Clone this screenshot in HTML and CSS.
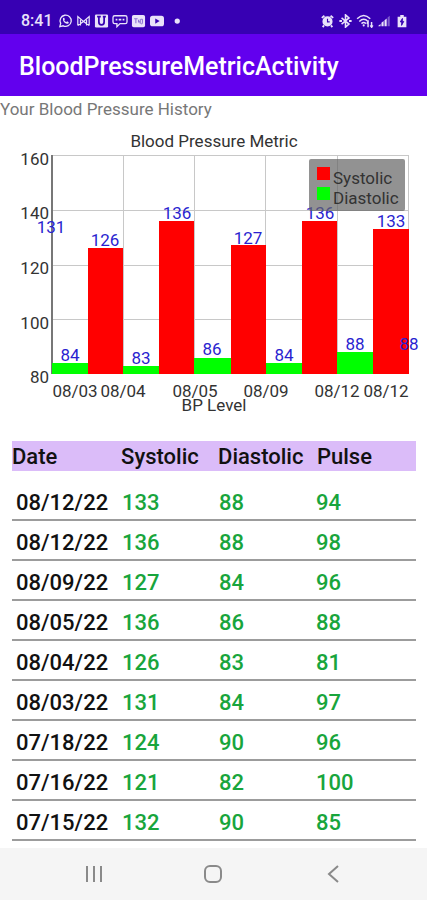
FILE: index.html
```html
<!DOCTYPE html>
<html lang="en">
<head>
  <meta charset="UTF-8">
  <meta name="viewport" content="width=device-width, initial-scale=1.0">
  <title>BloodPressureMetricActivity</title>
  <link rel="stylesheet" href="styles.css">
</head>
<body>
  <div class="status-bar">
    <div class="status-group">
      <span class="clock">8:41</span>
      <svg class="icon" viewBox="0 0 16 16" fill="none" stroke="currentColor" stroke-width="1.5">
        <path d="M1.5 14.5l1-3.8A6.4 6.4 0 1 1 5.400 13.500z"/>
        <path d="M5.200 4.700l1.300-.4.8 1.800-.7.900c.6 1.100 1.300 1.700 2.400 2.200l.9-.8 1.800 1c0 1.400-1 1.900-2 1.800-3-.4-5.200-3.400-4.500-6.500z" fill="currentColor" stroke="none"/>
      </svg>
      <svg class="icon" viewBox="0 0 16 16" fill="none" stroke="currentColor" stroke-width="1.4">
        <path d="M1.500 13V3l6.500 5.500L14.500 3v10M4.500 13V6.500M11.500 13V6.500M1.500 13L8 8.500l6.500 4.500"/>
      </svg>
      <svg class="icon" viewBox="0 0 16 16">
        <rect x="0.500" y="0.500" width="15" height="15" rx="1.500" fill="currentColor"/>
        <path d="M3 3h4.200M5 3v6c0 4.500 6 4.500 6 0V3M9.500 3H13" fill="none" stroke="#3700b3" stroke-width="2"/>
      </svg>
      <svg class="icon wide" viewBox="0 0 18 16" fill="none" stroke="currentColor" stroke-width="1.500">
        <path d="M3 2h12q2 0 2 2v5q0 2-2 2H9l-3.500 3.500V11H3q-2 0-2-2V4q0-2 2-2z"/>
        <path d="M4 6.500h2M7.500 6.500h3M12 6.500h2" stroke-width="2"/>
      </svg>
      <svg class="icon" viewBox="0 0 16 16">
        <rect x="0.500" y="1" width="15" height="14" rx="2" fill="currentColor"/>
        <path d="M3 5.500h4M5 5.500v5M8 6.500v2.500h2M10 6v5M12.500 6v3.500q0 2-1.500 2M12.500 6h-2" fill="none" stroke="#8b70d4" stroke-width="1.200"/>
      </svg>
      <svg class="icon wide" viewBox="0 0 18 16">
        <rect x="1" y="2" width="16" height="12" rx="3" fill="currentColor"/>
        <path d="M7 5l5 3-5 3z" fill="#3700b3"/>
      </svg>
      <svg class="icon" viewBox="0 0 16 16"><circle cx="10" cy="8" r="3" fill="currentColor"/></svg>
    </div>
    <div class="status-group">
      <svg class="icon" viewBox="0 0 16 16" fill="none" stroke="currentColor" stroke-width="2">
        <circle cx="8" cy="8.500" r="4.800" fill="currentColor"/>
        <path d="M1.500 4.500L4.500 2M11.500 2l3 2.500M4 13l-1.500 2M12 13l1.500 2"/>
        <path d="M8 5.500V9h2.500" stroke="#3700b3" stroke-width="1.300"/>
      </svg>
      <svg class="icon" viewBox="0 0 16 16" fill="none" stroke="currentColor" stroke-width="1.800">
        <path d="M3.500 4.500l8.500 7-4 3.500V1l4 3.500-8.500 7"/>
        <path d="M1 8h3M12 8h3" stroke-width="2.400"/>
      </svg>
      <svg class="icon wifi" viewBox="0 0 20 16" fill="none" stroke="currentColor" stroke-width="1.700">
        <path d="M1 5.500Q8.500-2 16 5.500M3.500 8.500Q8.500 3.500 13.500 8.500M6 11Q8.500 8.500 11 11"/>
        <circle cx="8.500" cy="13" r="1.200" fill="currentColor" stroke="none"/>
        <path d="M13.500 15V9l-1.500 2M17.500 9v6l-1.500-2M17.500 15l1.500-2"/>
      </svg>
      <svg class="icon" viewBox="0 0 16 16" fill="currentColor">
        <path d="M1 14h2.500v-2.500L1 13.500zM4.500 14H7V8L4.500 10zM8 14h2.500V5L8 7z"/>
        <path d="M11.500 14H14V2l-2.500 2z" opacity=".4"/>
      </svg>
      <svg class="icon battery" viewBox="0 0 16 16">
        <path d="M6 1h4v2h3v12H3V3h3z" fill="currentColor"/>
        <path d="M8.500 5L6 9h1.700L7.500 13 10 8.500H8.300z" fill="#3700b3" stroke="#3700b3"/>
      </svg>
    </div>
  </div>

  <header class="app-bar">
    <h1>BloodPressureMetricActivity</h1>
  </header>

  <main>
    <p class="subtitle">Your Blood Pressure History</p>

    <svg class="chart" viewBox="0 0 427 312" role="img" aria-label="Blood Pressure Metric">
      <text x="214" y="27" class="middle">Blood Pressure Metric</text>

      <!-- grid -->
      <path class="grid" d="M52 35.500H409M52 90.500H409M52 145.500H409M52 199.500H409M123.500 35V254M194.500 35V254M265.500 35V254M337.500 35V254M408.500 35V254"/>
      <path class="axis" d="M52 35V254"/>

      <g class="end">
        <text x="49" y="45">160</text>
        <text x="49" y="99">140</text>
        <text x="49" y="154">120</text>
        <text x="49" y="209">100</text>
        <text x="49" y="263">80</text>
      </g>

      <g class="systolic">
        <rect x="88" y="128" width="35" height="126"/>
        <rect x="159" y="101" width="35" height="153"/>
        <rect x="231" y="125" width="35" height="129"/>
        <rect x="302" y="101" width="35" height="153"/>
        <rect x="373" y="109" width="36" height="145"/>
      </g>
      <g class="diastolic">
        <rect x="52" y="243" width="36" height="11"/>
        <rect x="123" y="246" width="36" height="8"/>
        <rect x="194" y="238" width="37" height="16"/>
        <rect x="266" y="243" width="36" height="11"/>
        <rect x="337" y="232" width="36" height="22"/>
      </g>

      <g class="value middle">
        <text x="51" y="113">131</text>
        <text x="105" y="126">126</text>
        <text x="177" y="99">136</text>
        <text x="248" y="124">127</text>
        <text x="320" y="99">136</text>
        <text x="391" y="107">133</text>
        <text x="70" y="241">84</text>
        <text x="141" y="244">83</text>
        <text x="212" y="235">86</text>
        <text x="284" y="241">84</text>
        <text x="355" y="230">88</text>
        <text x="409" y="230">88</text>
      </g>

      <g class="middle">
        <text x="75" y="277">08/03</text>
        <text x="123" y="277">08/04</text>
        <text x="195" y="277">08/05</text>
        <text x="266" y="277">08/09</text>
        <text x="337" y="277">08/12</text>
        <text x="386" y="277">08/12</text>
        <text x="214" y="291">BP Level</text>
      </g>

      <!-- legend -->
      <rect class="legend" x="309" y="39" width="96" height="52" rx="2"/>
      <rect class="systolic" x="317" y="47" width="13" height="13"/>
      <rect class="diastolic" x="317" y="67" width="13" height="13"/>
      <text x="333" y="64">Systolic</text>
      <text x="333" y="84">Diastolic</text>
    </svg>

    <table class="history">
      <thead>
        <tr><th class="date">Date</th><th>Systolic</th><th>Diastolic</th><th class="pulse">Pulse</th></tr>
      </thead>
      <tbody>
        <tr><td>08/12/22</td><td>133</td><td>88</td><td>94</td></tr>
        <tr><td>08/12/22</td><td>136</td><td>88</td><td>98</td></tr>
        <tr><td>08/09/22</td><td>127</td><td>84</td><td>96</td></tr>
        <tr><td>08/05/22</td><td>136</td><td>86</td><td>88</td></tr>
        <tr><td>08/04/22</td><td>126</td><td>83</td><td>81</td></tr>
        <tr><td>08/03/22</td><td>131</td><td>84</td><td>97</td></tr>
        <tr><td>07/18/22</td><td>124</td><td>90</td><td>96</td></tr>
        <tr><td>07/16/22</td><td>121</td><td>82</td><td>100</td></tr>
        <tr><td>07/15/22</td><td>132</td><td>90</td><td>85</td></tr>
      </tbody>
    </table>
  </main>

  <nav class="nav-bar">
    <button type="button" aria-label="Recent apps">
      <svg viewBox="0 0 20 20"><path d="M3 2v16M10 2v16M17 2v16"/></svg>
    </button>
    <button type="button" aria-label="Home">
      <svg viewBox="0 0 20 20"><rect x="2" y="2" width="16" height="16" rx="5"/></svg>
    </button>
    <button type="button" aria-label="Back">
      <svg viewBox="0 0 20 20"><path d="M15 2l-9 8 9 8"/></svg>
    </button>
  </nav>
</body>
</html>
```
FILE: styles.css
```css
* {
  box-sizing: border-box;
}
body {
  margin: 0;
  min-height: 100vh;
  display: flex;
  flex-direction: column;
  font-family: Roboto, "Liberation Sans", sans-serif;
  background-color: #fff;
  color: #111;
}
.status-bar {
  display: flex;
  justify-content: space-between;
  align-items: center;
  height: 34px;
  padding: 7px 18px 0 21px;
  background-color: #3700b3;
  color: #e9e2fa;
}
.status-group {
  display: flex;
  align-items: center;
  gap: 3px;
}
.clock {
  font-size: 16px;
  font-weight: 500;
  line-height: 20px;
  margin-right: 2px;
}
.icon {
  width: 15px;
  height: 14px;
}
.icon.wide {
  width: 16px;
}
.icon.wifi {
  width: 18px;
}
.icon.battery {
  width: 14px;
}
.app-bar {
  display: flex;
  align-items: center;
  height: 62px;
  padding: 3px 19px 0;
  background-color: #6200ee;
  color: #fff;
}
.app-bar h1 {
  margin: 0;
  font-size: 25px;
  font-weight: 500;
  line-height: 32px;
}
main {
  flex: 1;
}
.subtitle {
  margin: 0;
  padding-top: 2px;
  font-size: 17px;
  line-height: 22px;
  color: #777;
}
.chart {
  display: block;
  width: 100%;
  font-size: 17px;
}
.chart text {
  fill: #333;
}
.chart .middle {
  text-anchor: middle;
}
.chart .end {
  text-anchor: end;
}
.chart .value text {
  fill: #2a1fd0;
}
.grid {
  fill: none;
  stroke: #c8c8c8;
}
.axis {
  stroke: #777;
  stroke-width: 2;
}
.systolic {
  fill: #f00;
}
.diastolic {
  fill: #0f0;
}
.legend {
  fill: #646464;
  fill-opacity: .7;
}
.history {
  width: calc(100% - 23px);
  margin: 9px 11px 0 12px;
  table-layout: fixed;
  border-collapse: separate;
  border-spacing: 0;
  font-size: 22px;
  line-height: 28px;
  font-weight: 500;
}
.history th {
  width: 24%;
  padding: 2px 0 0;
  background-color: #dbbcf9;
  font-weight: 500;
  text-align: left;
  white-space: nowrap;
}
.history .date {
  width: 27%;
}
.history .pulse {
  width: 25%;
  padding-left: 2px;
}
.history tbody::before {
  content: "";
  display: block;
  height: 10px;
}
.history td {
  padding: 8px 0 2px 1px;
  border-bottom: 2px solid #9c9c9c;
  color: #18a53c;
}
.history td:first-child {
  padding-left: 4px;
  color: #111;
}
.nav-bar {
  display: flex;
  justify-content: space-around;
  align-items: center;
  height: 52px;
  padding: 0 34px;
  background-color: #f5f5f5;
}
.nav-bar button {
  display: flex;
  padding: 8px;
  border: none;
  background: none;
  cursor: pointer;
}
.nav-bar svg {
  width: 20px;
  height: 20px;
  fill: none;
  stroke: #8a8a8a;
  stroke-width: 2;
}
```
